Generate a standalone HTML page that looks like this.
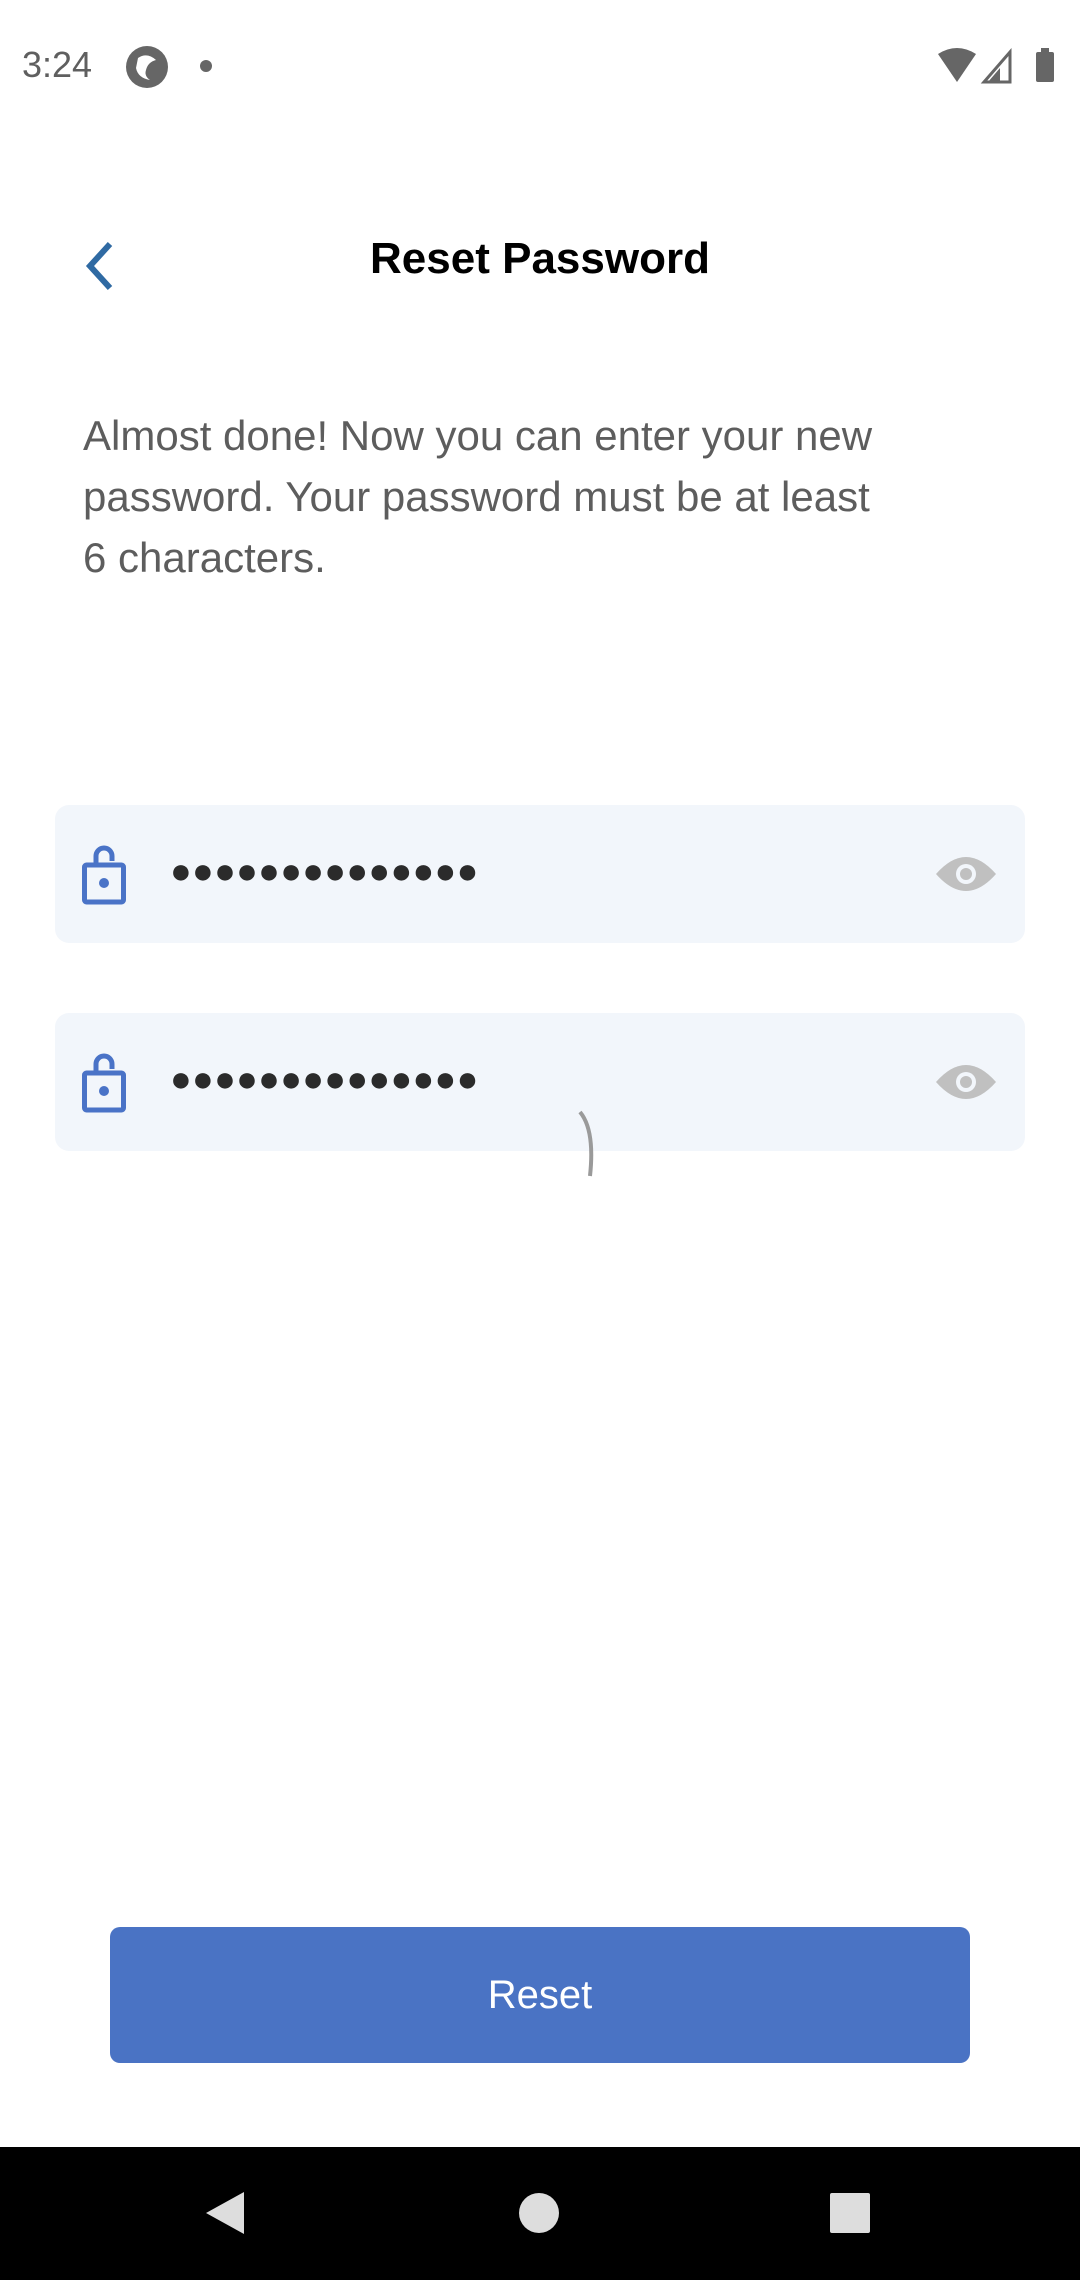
<!DOCTYPE html>
<html><head><meta charset="utf-8"><style>
body{margin:0;width:1080px;height:2280px;background:#fff;position:relative;overflow:hidden;font-family:"Liberation Sans",sans-serif}
.abs{position:absolute}
.field{position:absolute;left:55px;width:970px;height:138px;background:#f2f6fb;border-radius:14px}
</style></head><body>
<div class="abs" style="left:22px;top:44px;font-size:36px;color:#5f5f5f">3:24</div>
<svg class="abs" style="left:124px;top:44px" width="46" height="46" viewBox="0 0 46 46"><circle cx="23" cy="23" r="21" fill="#666"/><path d="M14 14 Q23 8 32 16 Q24 18 22 26 Q20 32 26 36 Q14 34 12 24 Z" fill="#fff"/></svg>
<div class="abs" style="left:200px;top:60px;width:12px;height:12px;border-radius:50%;background:#666"></div>
<svg class="abs" style="left:938px;top:48px" width="124" height="40" viewBox="0 0 124 40"><path d="M0 6 Q19 -6 38 6 L19 34 Z" fill="#666"/><path d="M46 34 L72 4 L72 34 Z" fill="none" stroke="#666" stroke-width="3"/><path d="M50 34 L62 20 L62 34Z" fill="#666"/><rect x="98" y="4" width="18" height="30" rx="2" fill="#666"/><rect x="103" y="0" width="8" height="5" fill="#666"/></svg>
<svg class="abs" style="left:80px;top:240px" width="40" height="52" viewBox="0 0 40 52"><path d="M30 4 L10 26 L30 48" fill="none" stroke="#2f6aa3" stroke-width="6"/></svg>
<div class="abs" style="left:0;width:1080px;top:234px;text-align:center;font-size:44px;font-weight:bold;color:#000">Reset Password</div>
<div class="abs" style="left:83px;top:405px;width:820px;font-size:42px;line-height:61px;color:#5d5d5d">Almost done! Now you can enter your new password. Your password must be at least 6 characters.</div>
<div class="field" style="top:805px"></div>
<div class="field" style="top:1013px"></div>
<svg class="abs" style="left:82px;top:845px" width="46" height="60" viewBox="0 0 46 60"><rect x="2.5" y="20" width="39" height="37" rx="2" fill="none" stroke="#4a73c7" stroke-width="5"/><path d="M14 20 V11 A8 8 0 0 1 30 11 V16" fill="none" stroke="#4a73c7" stroke-width="5"/><circle cx="22" cy="38" r="5" fill="#4a73c7"/></svg>
<svg class="abs" style="left:82px;top:1053px" width="46" height="60" viewBox="0 0 46 60"><rect x="2.5" y="20" width="39" height="37" rx="2" fill="none" stroke="#4a73c7" stroke-width="5"/><path d="M14 20 V11 A8 8 0 0 1 30 11 V16" fill="none" stroke="#4a73c7" stroke-width="5"/><circle cx="22" cy="38" r="5" fill="#4a73c7"/></svg>
<div class="abs" style="left:170px;top:850px;font-size:36px;letter-spacing:0.3px;color:#2b2b2b">●●●●●●●●●●●●●●</div>
<div class="abs" style="left:170px;top:1058px;font-size:36px;letter-spacing:0.3px;color:#2b2b2b">●●●●●●●●●●●●●●</div>
<svg class="abs" style="left:934px;top:852px" width="64" height="44" viewBox="0 0 64 44"><path d="M2 22 Q32 -12 62 22 Q32 56 2 22Z" fill="#c0c0c0"/><circle cx="32" cy="22" r="10" fill="#f2f6fb"/><circle cx="32" cy="22" r="6" fill="#c0c0c0"/></svg>
<svg class="abs" style="left:934px;top:1060px" width="64" height="44" viewBox="0 0 64 44"><path d="M2 22 Q32 -12 62 22 Q32 56 2 22Z" fill="#c0c0c0"/><circle cx="32" cy="22" r="10" fill="#f2f6fb"/><circle cx="32" cy="22" r="6" fill="#c0c0c0"/></svg>
<svg class="abs" style="left:560px;top:1100px" width="40" height="80" viewBox="0 0 40 80"><path d="M20 12 Q35 30 30 76" fill="none" stroke="#9a9a9a" stroke-width="4"/></svg>
<div class="abs" style="left:110px;top:1927px;width:860px;height:136px;background:#4a73c4;border-radius:10px;color:#fff;font-size:40px;text-align:center;line-height:136px">Reset</div>
<div class="abs" style="left:0;top:2147px;width:1080px;height:133px;background:#000"></div>
<svg class="abs" style="left:0;top:2147px" width="1080" height="133" viewBox="0 0 1080 133"><path d="M244 45 L244 87 L206 66Z" fill="#ddd"/><circle cx="539" cy="66" r="20" fill="#ddd"/><rect x="830" y="46" width="40" height="40" rx="2" fill="#ddd"/></svg>
</body></html>
